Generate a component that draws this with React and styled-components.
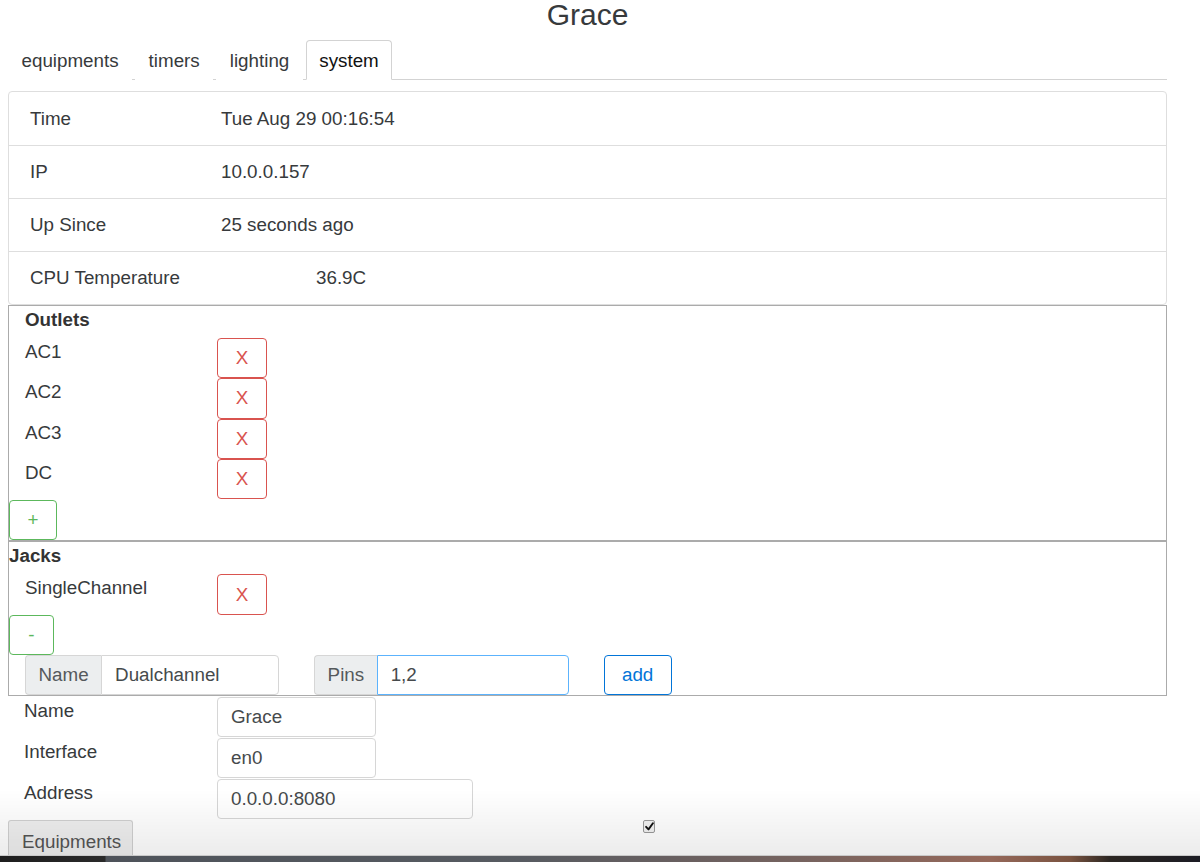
import React from 'react';
import styled, { createGlobalStyle } from 'styled-components';

const GlobalStyle = createGlobalStyle`
  * {
    box-sizing: border-box;
  }

  body {
    margin: 0;
    background: #fff;
    font-family: "Liberation Sans", Arial, sans-serif;
    font-size: 18.8px;
    line-height: 28px;
    color: #373a3c;
  }
`;

const outlets = ['AC1', 'AC2', 'AC3', 'DC'];
const jacks = ['SingleChannel'];

const info = [
  { label: 'Time', value: 'Tue Aug 29 00:16:54' },
  { label: 'IP', value: '10.0.0.157' },
  { label: 'Up Since', value: '25 seconds ago' },
  { label: 'CPU Temperature', value: '36.9C', indent: 95 },
];

const settings = [
  { label: 'Name', value: 'Grace', width: 159 },
  { label: 'Interface', value: 'en0', width: 159 },
  { label: 'Address', value: '0.0.0.0:8080', width: 256 },
];

const App = () => {
  return (
    <>
      <GlobalStyle />
      <Page>
        <Title>Grace</Title>

        <Tabs>
          <Tab>equipments</Tab>
          <Tab>timers</Tab>
          <Tab>lighting</Tab>
          <Tab $active>system</Tab>
        </Tabs>

        <ListGroup>
          {info.map((item) => (
            <ListItem key={item.label}>
              <ItemLabel>{item.label}</ItemLabel>
              <ItemValue $indent={item.indent || 0}>{item.value}</ItemValue>
            </ListItem>
          ))}
        </ListGroup>

        <Section>
          <SectionHeading $inset>Outlets</SectionHeading>
          {outlets.map((name) => (
            <EntryRow key={name}>
              <EntryLabel>{name}</EntryLabel>
              <OutlineButton $color="#d9534f" $width={50}>X</OutlineButton>
            </EntryRow>
          ))}
          <OutlineButton $color="#5cb85c" $width={48} $edge>+</OutlineButton>
        </Section>

        <Section>
          <SectionHeading>Jacks</SectionHeading>
          {jacks.map((name) => (
            <EntryRow key={name}>
              <EntryLabel>{name}</EntryLabel>
              <OutlineButton $color="#d9534f" $width={50}>X</OutlineButton>
            </EntryRow>
          ))}
          <OutlineButton $color="#5cb85c" $width={45}>-</OutlineButton>

          <NewJackRow>
            <InputGroup>
              <Addon>Name</Addon>
              <GroupInput $width={178} defaultValue="Dualchannel" />
            </InputGroup>
            <InputGroup>
              <Addon>Pins</Addon>
              <GroupInput $width={192} $focused defaultValue="1,2" />
            </InputGroup>
            <OutlineButton $color="#0275d8" $width={68}>add</OutlineButton>
          </NewJackRow>
        </Section>

        <Settings>
          {settings.map((s) => (
            <SettingRow key={s.label}>
              <SettingLabel>{s.label}</SettingLabel>
              <TextInput $width={s.width} defaultValue={s.value} />
            </SettingRow>
          ))}
        </Settings>

        <Footer>
          <FooterTab>Equipments</FooterTab>
          <CheckBox>
            <svg width="9" height="9" viewBox="0 0 10 10">
              <path d="M1.2 5.4 L3.9 8.2 L8.8 1.4" fill="none" stroke="#111" strokeWidth="2.1" strokeLinecap="round" strokeLinejoin="round" />
            </svg>
          </CheckBox>
        </Footer>
      </Page>

      <WindowShade />
      <DesktopStrip />
    </>
  );
};

// Styled components
const Page = styled.div`
  width: 1167px;
  padding-left: 8px;
`;

const Title = styled.h1`
  margin: 0;
  font-size: 30px;
  line-height: 29px;
  font-weight: 400;
  text-align: center;
  color: #373a3c;
`;

const Tabs = styled.div`
  display: flex;
  margin-top: 11px;
  height: 40px;
  border-bottom: 1px solid #d3d3d3;
`;

const Tab = styled.div`
  height: 40px;
  margin-right: 3px;
  padding: 0 12.5px;
  line-height: 39px;
  color: ${(p) => (p.$active ? '#111' : '#373a3c')};
  border: 1px solid ${(p) => (p.$active ? '#d3d3d3' : 'transparent')};
  border-bottom-color: ${(p) => (p.$active ? '#fff' : 'transparent')};
  border-radius: 4px 4px 0 0;
  background: #fff;
  cursor: pointer;
`;

const ListGroup = styled.div`
  margin-top: 11px;
  border: 1px solid #dedede;
  border-radius: 4px;
`;

const ListItem = styled.div`
  display: flex;
  align-items: center;
  height: 53px;
  padding-left: 21px;

  & + & {
    border-top: 1px solid #dedede;
  }
`;

const ItemLabel = styled.div`
  width: 191px;
`;

const ItemValue = styled.div`
  padding-left: ${(p) => p.$indent}px;
`;

const Section = styled.div`
  border: 1px solid #ababab;
`;

const SectionHeading = styled.div`
  padding-left: ${(p) => (p.$inset ? '16px' : '0')};
  margin-bottom: 4px;
  font-weight: bold;
  color: #333;
`;

const EntryRow = styled.div`
  display: flex;
  align-items: flex-start;
  padding-left: 16px;
`;

const EntryLabel = styled.div`
  width: 192px;
`;

const OutlineButton = styled.button`
  display: block;
  width: ${(p) => p.$width}px;
  height: 40.3px;
  margin-top: ${(p) => (p.$edge ? '1px' : '0')};
  padding: 0;
  border: 1px solid ${(p) => p.$color};
  border-radius: 4px;
  background: transparent;
  color: ${(p) => p.$color};
  font-family: inherit;
  font-size: 18.8px;
  cursor: pointer;
`;

const NewJackRow = styled.div`
  display: flex;
  align-items: center;
  gap: 35px;
  padding-left: 16px;
`;

const InputGroup = styled.div`
  display: flex;
  height: 40px;
`;

const Addon = styled.span`
  padding: 0 12.5px;
  line-height: 38px;
  background: #eceeef;
  border: 1px solid #d6d6d6;
  border-right: 0;
  border-radius: 4px 0 0 4px;
  color: #55595c;
`;

const GroupInput = styled.input`
  width: ${(p) => p.$width}px;
  height: 40px;
  padding: 0 13px;
  border: 1px solid ${(p) => (p.$focused ? '#5cb3fd' : '#d6d6d6')};
  border-radius: 0 4px 4px 0;
  font-family: inherit;
  font-size: 18.8px;
  color: #464a4c;
  outline: none;
`;

const Settings = styled.div`
  margin-top: 1px;
`;

const SettingRow = styled.div`
  display: flex;
  align-items: flex-start;
  height: 41px;
  padding-left: 16px;
`;

const SettingLabel = styled.div`
  width: 193px;
`;

const TextInput = styled.input`
  width: ${(p) => p.$width}px;
  height: 40px;
  padding: 0 13px;
  border: 1px solid #d6d6d6;
  border-radius: 4px;
  font-family: inherit;
  font-size: 18.8px;
  color: #464a4c;
  outline: none;
`;

const Footer = styled.div`
  display: flex;
  align-items: flex-start;
`;

const FooterTab = styled.button`
  width: 125px;
  height: 42px;
  padding: 0 13px;
  text-align: left;
  border: 1px solid #d0d0d0;
  border-bottom: 0;
  border-radius: 3px 3px 0 0;
  background: #efefef;
  color: #555;
  font-family: inherit;
  font-size: 18.8px;
  line-height: 40px;
`;

const CheckBox = styled.span`
  display: flex;
  align-items: center;
  justify-content: center;
  width: 12px;
  height: 13px;
  margin-left: 510px;
  border: 1px solid #9a9a9a;
  border-radius: 2px;
  background: #f2f2f2;
`;

const WindowShade = styled.div`
  position: fixed;
  left: 0;
  right: 0;
  bottom: 7px;
  height: 66px;
  pointer-events: none;
  background: linear-gradient(to bottom, rgba(0, 0, 0, 0), rgba(0, 0, 0, 0.075));
`;

const DesktopStrip = styled.div`
  position: fixed;
  left: 0;
  right: 0;
  bottom: 0;
  height: 7px;
  pointer-events: none;
  border-top: 1px solid #c9c9c9;
  background: linear-gradient(
    90deg,
    #1e1e1e 0,
    #2a2a2a 105px,
    #4e535a 106px,
    #575b61 520px,
    #76635f 800px,
    #95685a 990px,
    #7a5340 1070px,
    #2b2622 1110px,
    #1c1c24 1200px
  );
`;

export default App;
